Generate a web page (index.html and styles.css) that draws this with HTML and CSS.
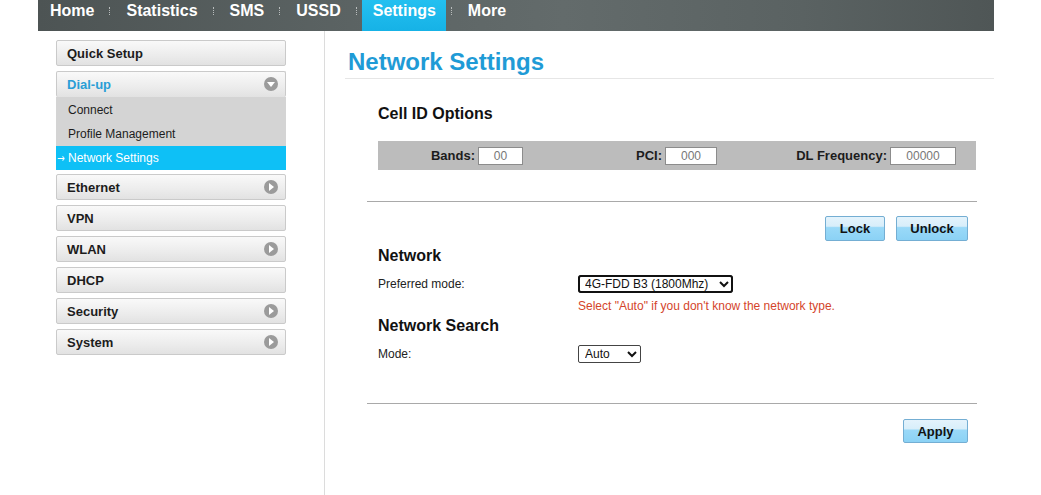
FILE: index.html
```html
<!DOCTYPE html>
<html lang="en">
<head>
  <meta charset="UTF-8">
  <meta name="viewport" content="width=device-width, initial-scale=1.0">
  <title>Network Settings</title>
  <link rel="stylesheet" href="styles.css">
</head>
<body>
  <div class="page">
    <ul class="topnav">
      <li><a href="#">Home</a></li>
      <li class="sep"></li>
      <li><a href="#">Statistics</a></li>
      <li class="sep"></li>
      <li><a href="#">SMS</a></li>
      <li class="sep"></li>
      <li><a href="#">USSD</a></li>
      <li class="sep"></li>
      <li class="active"><a href="#">Settings</a></li>
      <li class="sep"></li>
      <li><a href="#">More</a></li>
    </ul>

    <div class="layout">
      <div class="sidebar">
        <div class="menu-item">Quick Setup</div>
        <div class="menu-item open">Dial-up <span class="arrow down"></span></div>
        <ul class="submenu">
          <li>Connect</li>
          <li>Profile Management</li>
          <li class="current"><span class="to">&rarr;</span>Network Settings</li>
        </ul>
        <div class="menu-item">Ethernet <span class="arrow"></span></div>
        <div class="menu-item">VPN</div>
        <div class="menu-item">WLAN <span class="arrow"></span></div>
        <div class="menu-item">DHCP</div>
        <div class="menu-item">Security <span class="arrow"></span></div>
        <div class="menu-item">System <span class="arrow"></span></div>
      </div>

      <div class="main">
        <h1>Network Settings</h1>

        <div class="content">
          <h2 class="first">Cell ID Options</h2>
          <table class="cell-bar">
            <colgroup>
              <col style="width: 100px">
              <col style="width: 45px">
              <col style="width: 142px">
              <col style="width: 52px">
              <col style="width: 173px">
              <col style="width: 66px">
              <col>
            </colgroup>
            <tr>
              <td class="lbl">Bands:</td>
              <td><input class="w45" type="text" value="00"></td>
              <td class="lbl">PCI:</td>
              <td><input class="w52" type="text" value="000"></td>
              <td class="lbl">DL Frequency:</td>
              <td><input class="w66" type="text" value="00000"></td>
              <td></td>
            </tr>
          </table>

          <hr>

          <div class="btn-row">
            <button class="btn lock">Lock</button>
            <button class="btn unlock">Unlock</button>
          </div>

          <h2>Network</h2>
          <div class="form-row">
            <label>Preferred mode:</label>
            <select class="focused">
              <option>4G-FDD B3 (1800Mhz)</option>
              <option>Auto</option>
            </select>
          </div>
          <div class="hint">Select "Auto" if you don't know the network type.</div>

          <h2 class="after-hint">Network Search</h2>
          <div class="form-row">
            <label>Mode:</label>
            <select class="mode">
              <option>Auto</option>
              <option>Manual</option>
            </select>
          </div>

          <hr class="bottom">

          <div class="btn-row apply-row">
            <button class="btn apply">Apply</button>
          </div>
        </div>
      </div>
    </div>
  </div>
</body>
</html>
```

FILE: styles.css
```css
body {
  margin: 0;
  background: #fff;
  font-family: "Liberation Sans", Arial, sans-serif;
  color: #222;
}
.page {
  width: 956px;
  margin-left: 38px;
}

/* top navigation */
.topnav {
  list-style: none;
  margin: 0;
  padding: 0 0 0 1px;
  height: 31px;
  display: flex;
  align-items: stretch;
  background: linear-gradient(90deg, #4d5454 0%, #5c6464 35%, #636b6b 55%, #5a6262 80%, #4f5656 100%);
}
.topnav li a {
  display: block;
  padding: 0 10px 0 11px;
  line-height: 22px;
  color: #fff;
  font-weight: bold;
  font-size: 16px;
  text-decoration: none;
}
.topnav li.active {
  background: linear-gradient(#24c0f0, #16b2e6);
}
.topnav li.sep {
  width: 11px;
  display: flex;
  justify-content: center;
  padding-top: 7px;
  box-sizing: border-box;
}
.topnav li.sep::after {
  content: "";
  display: block;
  width: 0;
  height: 8px;
  border-left: 1px dotted #b8bcbc;
}

.layout {
  display: flex;
  min-height: 464px;
}

/* left menu */
.sidebar {
  width: 287px;
  box-sizing: border-box;
  padding: 9px 38px 0 18px;
  border-right: 1px solid #dcdcdc;
}
.menu-item {
  position: relative;
  height: 24px;
  line-height: 26px;
  padding-left: 10px;
  margin-bottom: 5px;
  border: 1px solid #cacaca;
  border-radius: 2px;
  background: linear-gradient(#f9f9f9, #ececec 60%, #e2e2e2);
  font-size: 13px;
  font-weight: bold;
  color: #1c1c1c;
}
.menu-item.open {
  color: #2a9ed6;
  margin-bottom: 0;
  border-bottom: none;
  height: 25px;
}
.arrow {
  position: absolute;
  right: 7px;
  top: 5px;
  width: 14px;
  height: 14px;
  border-radius: 50%;
  background: #9b9b9b;
}
.arrow::after {
  content: "";
  position: absolute;
  left: 5px;
  top: 3px;
  border-style: solid;
  border-width: 4px 0 4px 5px;
  border-color: transparent transparent transparent #fff;
}
.arrow.down::after {
  left: 3px;
  top: 5px;
  border-width: 5px 4px 0 4px;
  border-color: #fff transparent transparent transparent;
}
.submenu {
  list-style: none;
  margin: 0 0 4px;
  padding: 0;
  background: #d4d4d4;
}
.submenu li {
  height: 24px;
  line-height: 26px;
  padding-left: 12px;
  font-size: 12px;
  color: #1c1c1c;
}
.submenu li:nth-child(2) {
  height: 25px;
}
.submenu li.current {
  padding-left: 1px;
  line-height: 24px;
  background: #0ec0f6;
  color: #fff;
}
.submenu .to {
  display: inline-block;
  width: 11px;
  font-size: 12px;
  font-family: "DejaVu Sans", sans-serif;
  transform: scaleX(0.75);
  transform-origin: left center;
}

/* page content */
.main {
  flex: 1;
  padding: 17px 0 0 20px;
}
.main h1 {
  margin: 0;
  padding: 0 0 2px 3px;
  font-size: 24px;
  line-height: 28px;
  color: #1f9bd6;
  border-bottom: 1px solid #e6e6e6;
}
.content {
  margin: 0 17px 0 22px;
}
h2 {
  margin: 5px 0 0 11px;
  font-size: 16px;
  line-height: 20px;
  color: #111;
}
h2.first {
  margin-top: 25px;
}
h2.after-hint {
  margin-top: 2px;
}
.cell-bar {
  margin: 17px 0 0 11px;
  width: 598px;
  height: 29px;
  table-layout: fixed;
  border-collapse: collapse;
  background: #bcbcbc;
}
.cell-bar td {
  padding: 0;
}
.cell-bar .lbl {
  text-align: right;
  padding-right: 3px;
  font-size: 13px;
  font-weight: bold;
  color: #1c1c1c;
}
.cell-bar input {
  box-sizing: border-box;
  height: 18px;
  padding: 0;
  border: 1px solid #8c8c8c;
  background: #fff;
  text-align: center;
  font-family: "Liberation Sans", Arial, sans-serif;
  font-size: 12px;
  color: #777;
  display: block;
}
.w45 { width: 45px; }
.w52 { width: 52px; }
.w66 { width: 66px; }

hr {
  margin: 31px 0 0;
  border: none;
  border-top: 1px solid #a9a9a9;
}
hr.bottom {
  margin-top: 40px;
}
.btn-row {
  display: flex;
  justify-content: flex-end;
  gap: 11px;
  padding-right: 9px;
  margin-top: 14px;
}
.apply-row {
  margin-top: 15px;
}
.btn {
  height: 25px;
  padding: 0;
  border: 1px solid #74aed3;
  border-radius: 2px;
  background: linear-gradient(#e4f3fc 0%, #d8eefa 40%, #9ad9f8 46%, #8bd2f5 100%);
  font-family: "Liberation Sans", Arial, sans-serif;
  font-size: 13px;
  font-weight: bold;
  color: #111;
}
.lock { width: 60px; }
.unlock { width: 72px; }
.apply { width: 65px; height: 24px; }

.form-row {
  display: flex;
  align-items: center;
  margin: 9px 0 0 11px;
  height: 18px;
}
.form-row label {
  width: 200px;
  font-size: 12px;
  color: #222;
}
select {
  height: 18px;
  padding: 0 0 0 2px;
  border: 1px solid #444;
  border-radius: 2px;
  background: #fff;
  font-family: "Liberation Sans", Arial, sans-serif;
  font-size: 12px;
  color: #111;
}
select.focused {
  width: 155px;
  outline: 2px solid #111;
  outline-offset: -2px;
  border-radius: 3px;
}
select.mode {
  width: 63px;
}
.hint {
  margin: 6px 0 0 211px;
  font-size: 12px;
  line-height: 15px;
  color: #d4452b;
}
```
